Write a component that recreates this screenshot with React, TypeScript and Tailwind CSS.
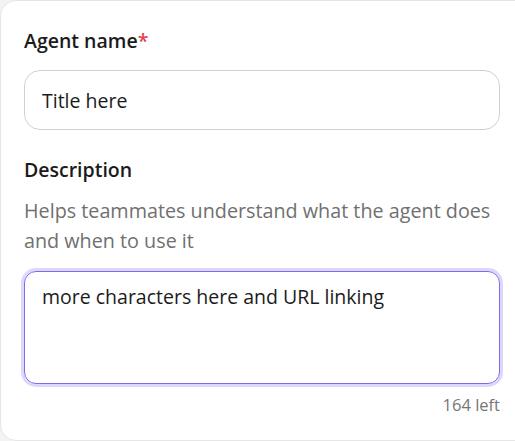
import React, { useState } from 'react';

const MAX = 200;

const App: React.FC = () => {
  const [title, setTitle] = useState('Title here');
  const [desc, setDesc] = useState('more characters here and URL linking');

  return (
    <div className="w-[515px] h-[441px] overflow-hidden bg-[#f3f3f3] font-['Open_Sans',sans-serif]">
      <div className="w-[540px] h-[441px] bg-white border border-[#e6e6e6] rounded-2xl px-[23px] pt-[28px]">
        <div className="w-[476px]">
          <label className="block text-[19.5px] font-semibold text-[#1b1b1b] leading-[24px]">
            Agent name<span className="text-[#e0454b]">*</span>
          </label>
          <input
            value={title}
            onChange={(e) => setTitle(e.target.value)}
            className="mt-[17px] w-full h-[60px] rounded-2xl border border-[#d0d0d0] px-[17px] text-[19.5px] text-[#1b1b1b] outline-none"
          />

          <label className="block mt-[28px] text-[19.5px] font-semibold text-[#1b1b1b] leading-[24px]">
            Description
          </label>
          <p className="mt-[14px] text-[19.75px] leading-[30px] text-[#707070]">
            Helps teammates understand what the agent does and when to use it
          </p>
          <textarea
            autoFocus
            value={desc}
            onChange={(e) => setDesc(e.target.value)}
            onFocus={(e) => e.currentTarget.setSelectionRange(desc.length, desc.length)}
            className="mt-[15px] block w-full h-[113px] resize-none rounded-xl border border-[#7b6cf0] ring-[3px] ring-[#dcd8fb] px-[17px] py-[12px] text-[19.5px] leading-[26px] text-[#1b1b1b] caret-black outline-none"
          />
          <div className="mt-[9px] text-right text-[16.5px] text-[#767676]">{MAX - desc.length} left</div>
        </div>
      </div>
    </div>
  );
};

export default App;
